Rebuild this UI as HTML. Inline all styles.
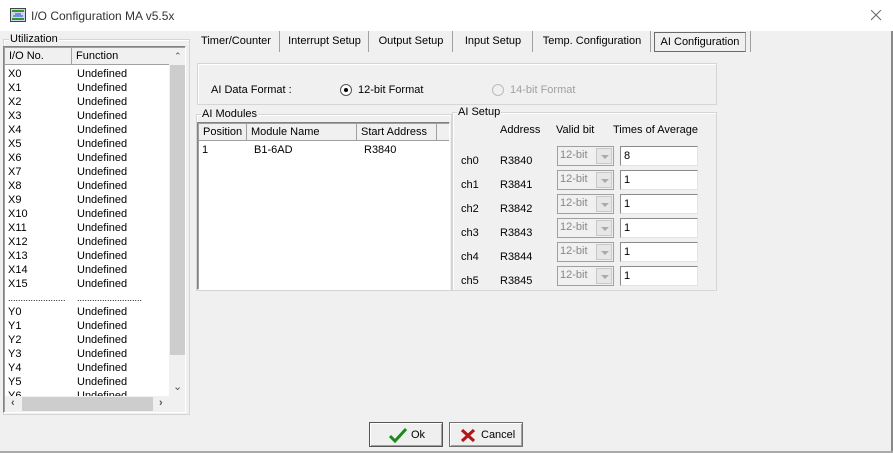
<!DOCTYPE html>
<html><head><style>
*{box-sizing:border-box;margin:0;padding:0}
body{width:893px;height:453px;background:#f0f0f0;font-family:"Liberation Sans",sans-serif;font-size:11px;color:#000;position:relative;overflow:hidden}
.a{position:absolute;white-space:nowrap}
.title{left:0;top:0;width:893px;height:31px;background:#fff}
.gb{position:absolute;border:1px solid #d5d5d5;box-shadow:inset 1px 1px 0 #fff}
.gl{position:absolute;background:#f0f0f0;padding:0 1px;top:-8px;left:5px;line-height:13px}
.white{position:absolute;background:#fff;border:1px solid #828282;border-right-color:#fff;border-bottom-color:#fff;box-shadow:inset 1px 1px 0 #a0a0a0}
.hdr{position:absolute;background:#f0f0f0;border-right:1px solid #a0a0a0;border-bottom:1px solid #a0a0a0;padding-left:4px;line-height:17px;height:17px}
.tab{position:absolute;top:31px;height:21px;line-height:21px;text-align:center;border-right:1px solid #a0a0a0}
.cmb{position:absolute;width:57px;height:20px;border:1px solid #a0a0a0;background:#f0f0f0;color:#888;padding-left:2px;line-height:17px}
.cmb i{position:absolute;right:1px;top:1px;width:16px;height:16px;background:#e6e6e6;border:1px solid #c8c8c8}
.cmb i:after{content:"";position:absolute;left:4px;top:6px;border-left:4px solid transparent;border-right:4px solid transparent;border-top:4px solid #aaa}
.ed{position:absolute;width:78px;height:20px;background:#fff;border:1px solid #8a8a8a;border-right-color:#e3e3e3;border-bottom-color:#e3e3e3;padding-left:3px;line-height:18px}
.btn{position:absolute;top:422px;height:25px;border:1px solid #707070;background:#efefef;box-shadow:inset 1px 1px 0 #fff,inset -1px -1px 0 #a0a0a0}
</style></head><body>
<div class="a title"></div>
<svg class="a" style="left:10px;top:8px" width="16" height="14"><rect x="0.5" y="0.5" width="15" height="13" fill="#cfd8f0" stroke="#444"/><rect x="2" y="2" width="12" height="2" fill="#2a9a2a"/><rect x="2" y="10" width="12" height="2" fill="#2a9a2a"/><path d="M3 8h10M5 6h6" stroke="#2040c0"/></svg>
<div class="a" style="left:31px;top:9px;font-size:12px;color:#333">I/O Configuration MA v5.5x</div>
<svg class="a" style="left:871px;top:10px" width="11" height="11"><path d="M0 0L10 10M10 0L0 10" stroke="#666" stroke-width="1"/></svg>
<div class="a" style="left:891px;top:31px;width:2px;height:422px;background:#888"></div>
<div class="a" style="left:0;top:451px;width:893px;height:2px;background:#aaa"></div>

<!-- Utilization -->
<div class="gb" style="left:3px;top:39px;width:187px;height:376px"><div class="gl" style="top:-7px">Utilization</div></div>
<div class="white" style="left:3px;top:46px;width:183px;height:367px;overflow:hidden">
<div class="hdr" style="left:1px;top:1px;width:67px">I/O No.</div>
<div class="hdr" style="left:68px;top:1px;width:101px">Function</div>
<div class="a" style="left:4px;top:20px;line-height:14px">X0<br>X1<br>X2<br>X3<br>X4<br>X5<br>X6<br>X7<br>X8<br>X9<br>X10<br>X11<br>X12<br>X13<br>X14<br>X15<br><span style="font-size:9px">.......................</span><br>Y0<br>Y1<br>Y2<br>Y3<br>Y4<br>Y5<br>Y6</div>
<div class="a" style="left:73px;top:20px;line-height:14px">Undefined<br>Undefined<br>Undefined<br>Undefined<br>Undefined<br>Undefined<br>Undefined<br>Undefined<br>Undefined<br>Undefined<br>Undefined<br>Undefined<br>Undefined<br>Undefined<br>Undefined<br>Undefined<br><span style="font-size:9px">..........................</span><br>Undefined<br>Undefined<br>Undefined<br>Undefined<br>Undefined<br>Undefined<br>Undefined</div>
<div class="a" style="left:165px;top:1px;width:17px;height:348px;background:#f0f0f0"></div>
<div class="a" style="left:166px;top:18px;width:15px;height:290px;background:#cdcdcd"></div>
<div class="a" style="left:170px;top:4px;font-size:9px;color:#555">&#8963;</div>
<div class="a" style="left:169px;top:333px;font-size:11px;color:#555">&#8964;</div>
<div class="a" style="left:1px;top:349px;width:181px;height:16px;background:#f0f0f0"></div>
<div class="a" style="left:18px;top:350px;width:131px;height:14px;background:#cdcdcd"></div>
<div class="a" style="left:7px;top:350px;color:#555;font-weight:bold">&#8249;</div>
<div class="a" style="left:155px;top:350px;color:#555;font-weight:bold">&#8250;</div>
</div>

<!-- tabs -->
<div class="tab" style="left:193px;width:87px">Timer/Counter</div>
<div class="tab" style="left:281px;width:88px">Interrupt Setup</div>
<div class="tab" style="left:370px;width:83px">Output Setup</div>
<div class="tab" style="left:454px;width:79px">Input Setup</div>
<div class="tab" style="left:534px;width:117px">Temp. Configuration</div>
<div class="a" style="left:654px;top:32px;width:92px;height:20px;border:1px solid #6a6a6a;border-right-color:#a0a0a0;line-height:19px;text-align:center;background:#f0f0f0">AI Configuration</div>
<div class="a" style="left:750px;top:31px;width:1px;height:21px;background:#a0a0a0"></div>

<!-- AI data format -->
<div class="gb" style="left:197px;top:63px;width:520px;height:42px"></div>
<div class="a" style="left:211px;top:84px">AI Data Format :</div>
<svg class="a" style="left:340px;top:84px" width="12" height="12"><circle cx="6" cy="6" r="5.5" fill="#fff" stroke="#555"/><circle cx="6" cy="6" r="2" fill="#000"/></svg>
<div class="a" style="left:358px;top:84px">12-bit Format</div>
<svg class="a" style="left:492px;top:84px" width="12" height="12"><circle cx="6" cy="6" r="5.5" fill="#f0f0f0" stroke="#bbb"/></svg>
<div class="a" style="left:510px;top:84px;color:#a0a0a0">14-bit Format</div>

<!-- AI modules -->
<div class="gb" style="left:196px;top:114px;width:256px;height:177px"><div class="gl" style="left:4px;top:-7px">AI Modules</div></div>
<div class="white" style="left:197px;top:122px;width:253px;height:168px">
<div class="hdr" style="left:1px;top:1px;width:48px">Position</div>
<div class="hdr" style="left:49px;top:1px;width:110px">Module Name</div>
<div class="hdr" style="left:159px;top:1px;width:80px">Start Address</div>
<div class="hdr" style="left:239px;top:1px;width:12px;border-right:none"></div>
<div class="a" style="left:4px;top:21px">1</div>
<div class="a" style="left:56px;top:21px">B1-6AD</div>
<div class="a" style="left:166px;top:21px">R3840</div>
</div>

<!-- AI setup -->
<div class="gb" style="left:452px;top:112px;width:265px;height:179px"><div class="gl" style="left:4px;top:-7px">AI Setup</div></div>
<div class="a" style="left:500px;top:124px">Address</div>
<div class="a" style="left:556px;top:124px">Valid bit</div>
<div class="a" style="left:613px;top:124px">Times of Average</div>

<div class="a" style="left:461px;top:155px">ch0</div><div class="a" style="left:500px;top:155px">R3840</div>
<div class="cmb" style="left:557px;top:146px">12-bit<i></i></div><div class="ed" style="left:620px;top:146px">8</div>
<div class="a" style="left:461px;top:179px">ch1</div><div class="a" style="left:500px;top:179px">R3841</div>
<div class="cmb" style="left:557px;top:170px">12-bit<i></i></div><div class="ed" style="left:620px;top:170px">1</div>
<div class="a" style="left:461px;top:203px">ch2</div><div class="a" style="left:500px;top:203px">R3842</div>
<div class="cmb" style="left:557px;top:194px">12-bit<i></i></div><div class="ed" style="left:620px;top:194px">1</div>
<div class="a" style="left:461px;top:227px">ch3</div><div class="a" style="left:500px;top:227px">R3843</div>
<div class="cmb" style="left:557px;top:218px">12-bit<i></i></div><div class="ed" style="left:620px;top:218px">1</div>
<div class="a" style="left:461px;top:251px">ch4</div><div class="a" style="left:500px;top:251px">R3844</div>
<div class="cmb" style="left:557px;top:242px">12-bit<i></i></div><div class="ed" style="left:620px;top:242px">1</div>
<div class="a" style="left:461px;top:275px">ch5</div><div class="a" style="left:500px;top:275px">R3845</div>
<div class="cmb" style="left:557px;top:266px">12-bit<i></i></div><div class="ed" style="left:620px;top:266px">1</div>

<!-- buttons -->
<div class="btn" style="left:369px;width:74px;border-color:#555">
<svg class="a" style="left:19px;top:4px" width="18" height="16"><path d="M1 9L6 14L17 2" fill="none" stroke="#1a8a1a" stroke-width="3"/></svg>
<div class="a" style="left:41px;top:6px">Ok</div></div>
<div class="btn" style="left:449px;width:74px">
<svg class="a" style="left:10px;top:5px" width="16" height="15"><path d="M2 2L14 13M14 2L2 13" stroke="#b01818" stroke-width="3.2"/></svg>
<div class="a" style="left:31px;top:6px">Cancel</div></div>
</body></html>
